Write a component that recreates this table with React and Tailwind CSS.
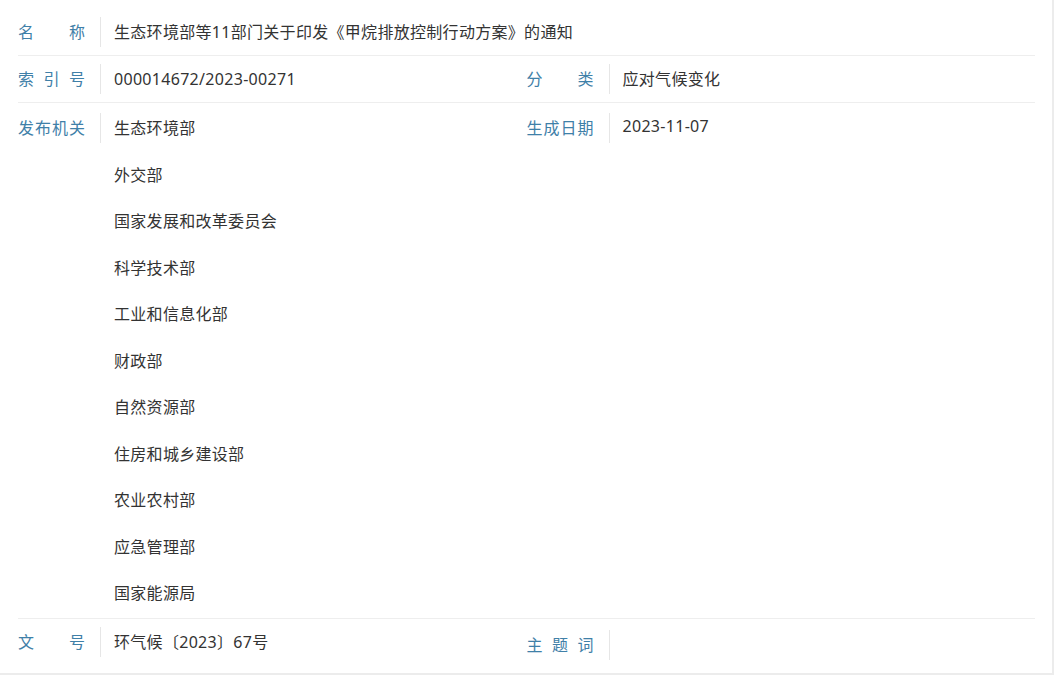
const LABEL = 'w-[67px] text-[#3f80a8] [text-align-last:justify] text-justify shrink-0';
const VALUE = 'pl-[13px] text-[#333] tracking-[0.3px]';

const orgs = [
  '生态环境部',
  '外交部',
  '国家发展和改革委员会',
  '科学技术部',
  '工业和信息化部',
  '财政部',
  '自然资源部',
  '住房和城乡建设部',
  '农业农村部',
  '应急管理部',
  '国家能源局',
];

function Label({ text }) {
  return (
    <div className="flex items-center w-[83px] shrink-0 h-[30px] border-r border-[#e6e6e6]">
      <span className={LABEL}>{text}</span>
    </div>
  );
}

function Field({ label, children }) {
  return (
    <div className="flex items-center h-[46px]">
      <Label text={label} />
      <div className={VALUE}>{children}</div>
    </div>
  );
}

export default function App() {
  return (
    <div
      className="w-[1054px] h-[675px] bg-white border-r-2 border-b-2 border-[#ececec] pl-[18px] pr-[17px] pt-[9px] text-[16px] leading-none"
      style={{ fontFamily: '"Noto Sans", "Noto Sans CJK SC", sans-serif' }}
    >
      <div className="border-b border-[#eeeeee]">
        <Field label="名称">生态环境部等11部门关于印发《甲烷排放控制行动方案》的通知</Field>
      </div>

      <div className="grid grid-cols-2 border-b border-[#eeeeee]">
        <Field label="索引号">000014672/2023-00271</Field>
        <Field label="分类">应对气候变化</Field>
      </div>

      <div className="grid grid-cols-2 border-b border-[#eeeeee] pt-[2px] pb-[1px]">
        <div className="flex items-start">
          <div className="h-[46.5px] flex items-center">
            <Label text="发布机关" />
          </div>
          <div className={VALUE}>
            {orgs.map(o => (
              <div key={o} className="h-[46.5px] flex items-center">{o}</div>
            ))}
          </div>
        </div>
        <div className="flex items-start">
          <div className="h-[46.5px] flex items-center">
            <Label text="生成日期" />
          </div>
          <div className={`${VALUE} h-[42px] flex items-center`}>2023-11-07</div>
        </div>
      </div>

      <div className="grid grid-cols-2">
        <Field label="文号">环气候〔2023〕67号</Field>
        <div className="flex items-center h-[52px]">
          <Label text="主题词" />
        </div>
      </div>
    </div>
  );
}
